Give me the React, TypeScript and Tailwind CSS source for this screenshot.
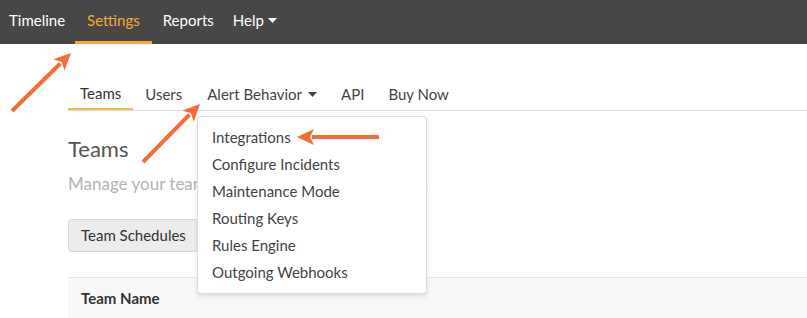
import { ReactNode } from 'react';

const font = { fontFamily: 'Lato, "Open Sans", sans-serif' };

function Caret({ className = '' }: { className?: string }) {
  return (
    <svg width="9" height="5" viewBox="0 0 9 5" className={className}>
      <path d="M0 0 L9 0 L4.5 5 Z" fill="currentColor" />
    </svg>
  );
}

function Arrow({ x1, y1, x2, y2 }: { x1: number; y1: number; x2: number; y2: number }) {
  // line plus a filled head pointing at (x2, y2)
  const a = Math.atan2(y2 - y1, x2 - x1);
  const len = 17;
  const w = 8;
  const bx = x2 - len * Math.cos(a);
  const by = y2 - len * Math.sin(a);
  const px = -Math.sin(a) * w;
  const py = Math.cos(a) * w;
  return (
    <g>
      <line x1={x1} y1={y1} x2={bx + 2 * Math.cos(a)} y2={by + 2 * Math.sin(a)} stroke="#f56d35" strokeWidth="4" />
      <path d={`M${x2} ${y2} L${bx + px} ${by + py} L${bx + 4 * Math.cos(a)} ${by + 4 * Math.sin(a)} L${bx - px} ${by - py} Z`} fill="#f56d35" />
    </g>
  );
}

function SubTab({ children, active }: { children: ReactNode; active?: boolean }) {
  return (
    <div className={`px-3 h-full flex items-center ${active ? 'border-b-2 border-[#f7b955] -mb-px text-[#333]' : 'text-[#444]'}`}>
      {children}
    </div>
  );
}

export default function App() {
  const menu = ['Integrations', 'Configure Incidents', 'Maintenance Mode', 'Routing Keys', 'Rules Engine', 'Outgoing Webhooks'];
  return (
    <div className="relative w-[807px] h-[318px] overflow-hidden bg-white" style={font}>
      {/* top nav */}
      <div className="h-[44px] bg-[#474747] flex items-stretch text-[15px] text-white">
        <div className="ml-[9px] flex items-center pb-[3px]">Timeline</div>
        <div className="ml-[10px] px-[12px] flex items-center text-[#f6a938] border-b-[3px] border-[#f6a938]">Settings</div>
        <div className="ml-[11px] flex items-center pb-[3px]">Reports</div>
        <div className="ml-[19px] flex items-center gap-[4px] pb-[3px]">
          Help <Caret />
        </div>
      </div>

      <div className="pl-[68px]">
        {/* sub nav */}
        <div className="mt-[34px] h-[33px] flex items-stretch border-b border-[#dcdcdc] text-[15px]">
          <SubTab active>Teams</SubTab>
          <SubTab>Users</SubTab>
          <div className="px-[13px] flex items-center gap-[6px] text-[#444]">
            Alert Behavior <Caret />
          </div>
          <div className="px-[11px] flex items-center text-[#444]">API</div>
          <div className="px-[13px] flex items-center text-[#444]">Buy Now</div>
        </div>

        <h1 className="mt-[24px] text-[22px] leading-[28px] text-[#555]">Teams</h1>
        <p className="mt-[9px] text-[17px] leading-[24px] text-[#b3b3b3]">Manage your teams and their escalation policies.</p>

        <div className="mt-[23px] flex">
          <button className="h-[33px] px-[12px] bg-[#ececec] border border-[#d8d8d8] rounded-[4px] text-[15px] text-[#333]">
            Team Schedules
          </button>
          <button className="h-[33px] ml-[4px] px-[12px] bg-[#ececec] border border-[#d8d8d8] rounded-[4px] text-[15px] text-[#333]">
            Escalations
          </button>
        </div>

        <div className="mt-[25px] bg-[#f8f8f8] border-t border-[#e4e4e4] h-[60px] pl-[13px] pt-[9px] text-[15px] font-bold text-[#333]">
          Team Name
        </div>
      </div>

      {/* dropdown */}
      <div className="absolute left-[197px] top-[116px] w-[230px] h-[178px] bg-white border border-[#dcdcdc] rounded-[4px] shadow-[0_2px_4px_rgba(0,0,0,0.12)] pt-[7px] pl-[14px] text-[15px] text-[#444]">
        {menu.map((m) => (
          <div key={m} className="h-[27px] leading-[27px]">{m}</div>
        ))}
      </div>

      {/* annotation arrows */}
      <svg className="absolute inset-0 pointer-events-none" width="807" height="318">
        <Arrow x1={12} y1={111} x2={71} y2={53} />
        <Arrow x1={143} y1={162} x2={200} y2={104} />
        <Arrow x1={379} y1={137} x2={297} y2={137} />
      </svg>
    </div>
  );
}
